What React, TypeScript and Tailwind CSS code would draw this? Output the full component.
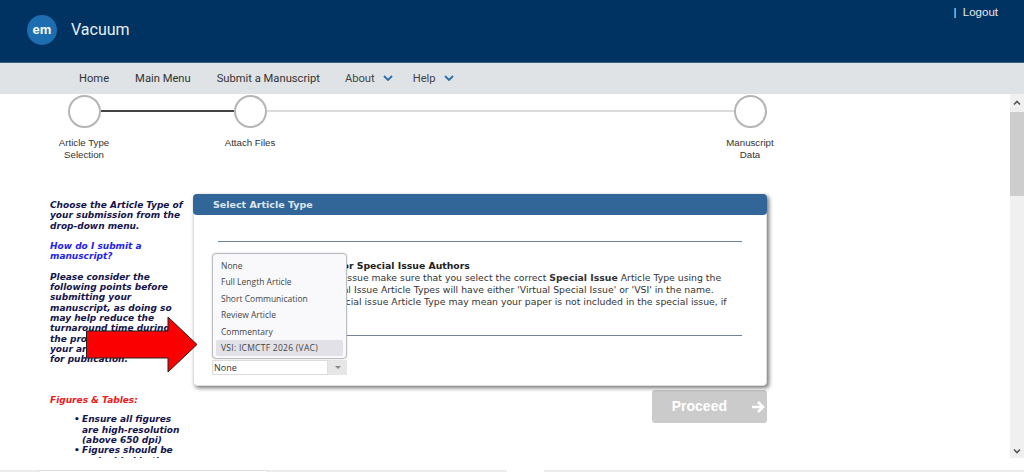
import React from "react";

const bodyFont = "font-['DejaVu_Sans',Verdana,sans-serif]";

function Step({ label, width }: { label: React.ReactNode; width: string }) {
  return (
    <div className={`flex flex-col items-center ${width}`}>
      <div className="w-[33px] h-[33px] rounded-full border-[2px] border-[#b5b5b5] bg-white shrink-0" />
      <div className="mt-[9px] text-center text-[9.7px] leading-[12px] text-[#333] font-['Liberation_Sans',sans-serif] whitespace-nowrap">{label}</div>
    </div>
  );
}

function Chevron() {
  return (
    <svg width="10" height="6" viewBox="0 0 10 6" className="ml-[8px] -mt-[1px]" fill="none" stroke="#2a6fa8" strokeWidth="1.8">
      <path d="M1 1l4 4 4-4" />
    </svg>
  );
}

export default function App() {
  return (
    <div className="relative w-[1024px] h-[472px] overflow-hidden bg-white flex flex-col font-['Liberation_Sans',sans-serif]">
      <header className="h-[63px] shrink-0 bg-[#013362] flex justify-between border-b border-[#3d5f80]">
        <div className="flex items-center pl-[27px] pb-[3px]">
          <div className="w-[30px] h-[30px] rounded-full bg-[#1c6eb0] flex items-center justify-center text-white font-bold text-[13px]">em</div>
          <div className="ml-[14px] text-[16px] text-[#e8eef4] font-['Roboto',sans-serif]">Vacuum</div>
        </div>
        <div className="pt-[5px] pr-[26px] text-[11.5px] leading-[14px] text-[#e4e9ee]">|&nbsp; Logout</div>
      </header>
      <nav className="h-[31px] pt-[1px] shrink-0 bg-[#dfe3e6] flex items-center pl-[79px] text-[11.2px] text-[#333] font-['Roboto',sans-serif]">
        <span>Home</span>
        <span className="ml-[26px]">Main Menu</span>
        <span className="ml-[26px]">Submit a Manuscript</span>
        <span className="ml-[25px] text-[#444] flex items-center">About<Chevron /></span>
        <span className="ml-[20px] text-[#444] flex items-center">Help<Chevron /></span>
      </nav>
      <div className="flex-1 flex min-h-0">
        <main className="flex-1 min-w-0 overflow-hidden h-[364px]">
          <div className="flex pl-[34px] pt-[1px] h-[100px]">
            <Step width="w-[100px]" label={<>Article Type<br />Selection</>} />
            <div className="w-[133px] h-[2px] mt-[15px] -ml-[33.5px] bg-[#444]" />
            <Step width="w-[100px] -ml-[33.5px]" label="Attach Files" />
            <div className="w-[467px] h-[2px] mt-[15px] -ml-[33.5px] bg-[#dcdcdc]" />
            <Step width="w-[100px] -ml-[33.5px]" label={<>Manuscript<br />Data</>} />
          </div>
          <div className="flex pl-[50px]">
            <aside className={`w-[136px] shrink-0 mr-[7px] pt-[6px] text-[9px] leading-[10.35px] font-bold italic text-[#14144b] whitespace-nowrap ${bodyFont}`}>
              <p>Choose the Article Type of<br />your submission from the<br />drop-down menu.</p>
              <p className="mt-[10px] text-[#2222ee]">How do I submit a<br />manuscript?</p>
              <p className="mt-[10px]">Please consider the<br />following points before<br />submitting your<br />manuscript, as doing so<br />may help reduce the<br />turnaround time during<br />the processing of<br />your article submission<br />for publication.</p>
              <p className="mt-[30px] text-[#f01818]">Figures &amp; Tables:</p>
              <ul className="mt-[9px] ml-[32px] list-none">
                <li className="flex"><span className="w-[8px] -ml-[8px] shrink-0">•</span><span>Ensure all figures<br />are high-resolution<br />(above 650 dpi)</span></li>
                <li className="flex"><span className="w-[8px] -ml-[8px] shrink-0">•</span><span>Figures should be<br />embedded in the</span></li>
              </ul>
            </aside>
            <div className="w-[574px] shrink-0">
              <section className={`relative rounded-[4px] bg-white shadow-[2px_2px_4px_rgba(0,0,0,0.55)] border border-[#ddd] h-[192px] ${bodyFont}`}>
                <div className="h-[21px] -mx-px -mt-px pt-[1px] rounded-[4px] bg-[#326698] flex items-center pl-[20px] text-[9.5px] font-bold text-[#dce6ef]">Select Article Type</div>
                <div className="mx-[24px] mt-[26px] border-t border-[#71849c]" />
                <div className="ml-[24px] mt-[18px] text-[9.3px] leading-[11.9px] text-[#333] whitespace-nowrap">
                  <div className="font-bold text-[#222]">Important information for Special Issue Authors</div>
                  <div>For submitting to a special issue make sure that you select the correct <b>Special Issue</b> Article Type using the</div>
                  <div>drop-down menu. All Special Issue Article Types will have either 'Virtual Special Issue' or 'VSI' in the name.</div>
                  <div>Note: failing to select a special issue Article Type may mean your paper is not included in the special issue, if</div>
                </div>
                <div className="mx-[24px] mt-[27px] border-t border-[#71849c]" />
                <div className="absolute left-[18px] top-[165px] w-[135px] h-[15px] flex text-[9px] text-[#333] font-['Open_Sans',sans-serif]">
                  <div className="w-[116px] border border-[#ddd] pl-[1px] leading-[14px]">None</div>
                  <div className="w-[19px] bg-[#e6e6e6] flex items-center justify-center"><div className="w-0 h-0 border-x-[3px] border-x-transparent border-t-[3px] border-t-[#888]" /></div>
                </div>
                <div className="absolute left-[18px] top-[58px] w-[135px] h-[106px] rounded-[4px] border border-[#b9bcc0] bg-[#f9f9fb] shadow-[0_0_2px_rgba(0,0,0,0.2)] pt-[4px] px-[3px] text-[8.5px] leading-[16.4px] text-[#444] font-['Open_Sans',sans-serif]">
                  <div className="pl-[5px]">None</div>
                  <div className="pl-[5px]">Full Length Article</div>
                  <div className="pl-[5px]">Short Communication</div>
                  <div className="pl-[5px]">Review Article</div>
                  <div className="pl-[5px]">Commentary</div>
                  <div className="pl-[5px] rounded-[2px] bg-[#e1e1e7] tracking-[0.27px]">VSI: ICMCTF 2026 (VAC)</div>
                </div>
              </section>
              <div className="flex justify-end">
                <button className="mt-[4px] w-[115px] h-[33px] rounded-[3px] bg-[#cbcbcb] text-white font-bold text-[14px] flex items-center justify-end pr-[2px]">
                  <span>Proceed</span>
                  <svg width="14" height="14" viewBox="0 0 14 14" className="ml-[24px]" fill="none" stroke="#fff" strokeWidth="2.6"><path d="M1 7h11M7 2l5 5-5 5" /></svg>
                </button>
              </div>
            </div>
          </div>
        </main>
        <div className="w-[14px] h-[364px] shrink-0 bg-[#f0f0f0] flex flex-col items-center">
          <svg width="8" height="6" viewBox="0 0 8 6" className="mt-[6px] mb-[6px]" fill="none" stroke="#555" strokeWidth="1.6"><path d="M1 4.5L4 1.5l3 3" /></svg>
          <div className="w-full h-[84px] bg-[#cdcdcd]" />
          <div className="flex-1" />
          <svg width="8" height="6" viewBox="0 0 8 6" className="mb-[4px]" fill="none" stroke="#555" strokeWidth="1.6"><path d="M1 1.5L4 4.5l3-3" /></svg>
        </div>
      </div>
      <div className="h-[12px] shrink-0 bg-white" />
      <div className="h-[2px] shrink-0 flex bg-[#ececec]">
        <div className="ml-[38px] w-[230px] bg-white border-t border-x border-[#ddd]" />
        <div className="ml-[239px] w-[37px] bg-white" />
      </div>
      <svg className="absolute left-[86px] top-[316px]" width="112" height="58" viewBox="0 0 112 58">
        <path d="M0.5 15H82V1L111 28.5L82 56V42H0.5Z" fill="#fb0000" stroke="#222" strokeWidth="1" />
      </svg>
    </div>
  );
}
